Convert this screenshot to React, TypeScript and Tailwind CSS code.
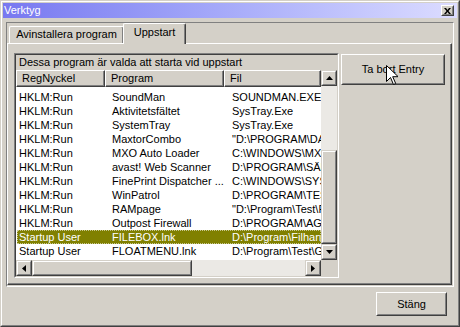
const ROWS: [string, string, string][] = [
  ["HKLM:Run", "SoundMan", "SOUNDMAN.EXE"],
  ["HKLM:Run", "Aktivitetsfältet", "SysTray.Exe"],
  ["HKLM:Run", "SystemTray", "SysTray.Exe"],
  ["HKLM:Run", "MaxtorCombo", "\"D:\\PROGRAM\\DAEMON\\MAXTOR.EXE\""],
  ["HKLM:Run", "MXO Auto Loader", "C:\\WINDOWS\\MXOALDR.EXE"],
  ["HKLM:Run", "avast! Web Scanner", "D:\\PROGRAM\\SÄKERHET\\AVAST4\\ASHWEBSV.EXE"],
  ["HKLM:Run", "FinePrint Dispatcher ...", "C:\\WINDOWS\\SYSTEM\\FPDISP4.EXE"],
  ["HKLM:Run", "WinPatrol", "D:\\PROGRAM\\TEST\\WINPATROL.EXE"],
  ["HKLM:Run", "RAMpage", "\"D:\\Program\\Test\\RAMpage\\RAMpage.exe\""],
  ["HKLM:Run", "Outpost Firewall", "D:\\PROGRAM\\AGNITUM\\OUTPOST.EXE"],
  ["Startup User", "FILEBOX.lnk", "D:\\Program\\Filhantering\\FileBox.exe"],
  ["Startup User", "FLOATMENU.lnk", "D:\\Program\\Test\\GFloat\\FloatMenu.exe"],
];
const SELECTED = 10;

// small black scroll arrows
const Arrow = ({ dir }: { dir: "up" | "down" | "left" | "right" }) => {
  const pts = {
    up: "3.5,0 7,4 0,4",
    down: "0,0 7,0 3.5,4",
    left: "4,0 4,7 0,3.5",
    right: "0,0 4,3.5 0,7",
  }[dir];
  const vertical = dir === "up" || dir === "down";
  return (
    <svg width={vertical ? 7 : 4} height={vertical ? 4 : 7} viewBox={vertical ? "0 0 7 4" : "0 0 4 7"}>
      <polygon points={pts} fill="#000" />
    </svg>
  );
};

function ScrollBtn({ className, children }: { className: string; children?: React.ReactNode }) {
  return (
    <div className={`${className} shrink-0 border border-t-[#d4d0c8] border-l-[#d4d0c8] border-r-[#404040] border-b-[#404040] bg-[#d4d0c8]`}>
      <div className="h-full w-full border border-t-white border-l-white border-r-[#808080] border-b-[#808080] flex items-center justify-center">
        {children}
      </div>
    </div>
  );
}

function PushBtn({ className, children }: { className: string; children?: React.ReactNode }) {
  return (
    <div className={`${className} shrink-0 border border-t-white border-l-white border-r-[#404040] border-b-[#404040] bg-[#d4d0c8]`}>
      <div className="h-full w-full border border-t-[#d4d0c8] border-l-[#d4d0c8] border-r-[#808080] border-b-[#808080] flex items-center justify-center">
        {children}
      </div>
    </div>
  );
}

function HeaderCell({ className, label }: { className: string; label: string }) {
  return (
    <div className={`${className} h-full border border-t-white border-l-white border-r-[#404040] border-b-[#404040]`}>
      <div className="h-full w-full border-r border-b border-[#808080] flex items-center pl-[5px] leading-none whitespace-nowrap overflow-hidden">
        {label}
      </div>
    </div>
  );
}

export default function App() {
  return (
    <div className="w-[460px] h-[327px] bg-[#d4d0c8] text-black text-[11px] font-['Liberation_Sans',Arial,sans-serif] border border-t-[#d4d0c8] border-l-[#d4d0c8] border-r-[#404040] border-b-[#404040]">
      <div className="h-full w-full border border-t-white border-l-white border-r-[#808080] border-b-[#808080] p-[1px] flex flex-col">
        {/* Title bar */}
        <div className="h-[15px] shrink-0 bg-linear-to-r from-[#7878f0] to-[#dcdcff] flex items-center justify-between pl-[1px] pr-[3px]">
          <span className="text-white leading-none">Verktyg</span>
          <PushBtn className="w-[13px] h-[11px]">
            <svg width="7" height="6" viewBox="0 0 7 6">
              <path d="M0 0h2l1.5 2L5 0h2L4.5 3 7 6H5L3.5 4 2 6H0l2.5-3z" fill="#000" />
            </svg>
          </PushBtn>
        </div>

        {/* Body */}
        <div className="flex-1 flex flex-col px-[3px] pt-[4px]">
          <div className="w-[448px] h-[265px] shrink-0 border border-t-[#808080] border-l-[#808080] border-r-white border-b-white flex flex-col">
            {/* Tabs */}
            <div className="h-[20px] shrink-0 flex items-end pl-[2px] relative z-10">
              <div className="w-[115px] h-[17px] border-t border-l border-white border-r border-r-[#404040] rounded-t-[2px] shadow-[inset_-1px_0_#808080] flex items-center justify-center leading-none pb-[1px]">
                Avinstallera program
              </div>
              <div className="w-[63px] h-[21px] mb-[-1px] ml-[-1px] bg-[#d4d0c8] border-t border-l border-white border-r border-r-[#404040] rounded-t-[2px] shadow-[inset_-1px_0_#808080] flex items-start justify-center pt-[3px] leading-none">
                Uppstart
              </div>
            </div>

            {/* Panel */}
            <div className="w-[445px] h-[242px] shrink-0 border border-t-white border-l-white border-r-[#404040] border-b-[#404040] shadow-[inset_-1px_-1px_#808080] flex items-start gap-[2px] pl-[6px] pt-[9px]">
              {/* List box */}
              <div className="w-[325px] h-[225px] shrink-0 border border-t-[#808080] border-l-[#808080] border-r-white border-b-white">
                <div className="h-full w-full border border-t-[#404040] border-l-[#404040] border-r-[#d4d0c8] border-b-[#d4d0c8] flex flex-col">
                  <div className="h-[15px] shrink-0 flex items-center pl-[3px] leading-none">
                    Dessa program är valda att starta vid uppstart
                  </div>
                  <div className="flex h-[206px]">
                    <div className="w-[305px] flex flex-col">
                      <div className="h-[190px] bg-white overflow-hidden flex flex-col">
                        <div className="h-[17px] shrink-0 flex bg-[#d4d0c8]">
                          <HeaderCell className="w-[89px]" label="RegNyckel" />
                          <HeaderCell className="w-[119px]" label="Program" />
                          <HeaderCell className="flex-1" label="Fil" />
                        </div>
                        <div className="pt-[3px] flex flex-col">
                          {ROWS.map(([key, prog, file], i) => (
                            <div
                              key={i}
                              className={
                                i === SELECTED
                                  ? "h-[14px] ml-[1px] flex items-center leading-none whitespace-nowrap bg-[#808000] text-white outline-1 outline-dotted outline-offset-[-1px] outline-[#c8c890]"
                                  : "h-[14px] ml-[1px] flex items-center leading-none whitespace-nowrap"
                              }
                            >
                              <div className="w-[88px] pl-[2px] overflow-hidden">{key}</div>
                              <div className="w-[119px] pl-[7px] overflow-hidden">{prog}</div>
                              <div className="flex-1 pl-[8px] overflow-hidden">{file}</div>
                            </div>
                          ))}
                        </div>
                      </div>
                      {/* Horizontal scrollbar */}
                      <div className="h-[16px] flex">
                        <ScrollBtn className="w-[16px] h-[16px]"><Arrow dir="left" /></ScrollBtn>
                        <ScrollBtn className="w-[160px] h-[16px]" />
                        <div className="flex-1 bg-[#ebe9e5]" />
                        <ScrollBtn className="w-[16px] h-[16px]"><Arrow dir="right" /></ScrollBtn>
                      </div>
                    </div>
                    {/* Vertical scrollbar */}
                    <div className="w-[16px] flex flex-col">
                      <ScrollBtn className="w-[16px] h-[16px]"><Arrow dir="up" /></ScrollBtn>
                      <div className="h-[64px] bg-[#ebe9e5]" />
                      <ScrollBtn className="w-[16px] h-[94px]" />
                      <ScrollBtn className="w-[16px] h-[16px]"><Arrow dir="down" /></ScrollBtn>
                      <div className="h-[16px] bg-[#d4d0c8]" />
                    </div>
                  </div>
                </div>
              </div>

              {/* Ta bort Entry button with mouse pointer over it */}
              <div className="relative mt-[1px]">
                <PushBtn className="w-[104px] h-[31px]">
                  <span className="leading-none">Ta bort Entry</span>
                </PushBtn>
                <svg className="absolute left-[45px] top-[11px]" width="12" height="20" viewBox="0 0 12 20">
                  <path d="M0.5 0.5v16l4-4 3 7 2.2-1-3-6.8h5.5z" fill="#fff" stroke="#000" strokeWidth="1" />
                </svg>
              </div>
            </div>
          </div>

          {/* Bottom */}
          <div className="flex justify-end pr-[7px] pt-[5px]">
            <PushBtn className="w-[71px] h-[24px]">
              <span className="leading-none">Stäng</span>
            </PushBtn>
          </div>
        </div>
      </div>
    </div>
  );
}
